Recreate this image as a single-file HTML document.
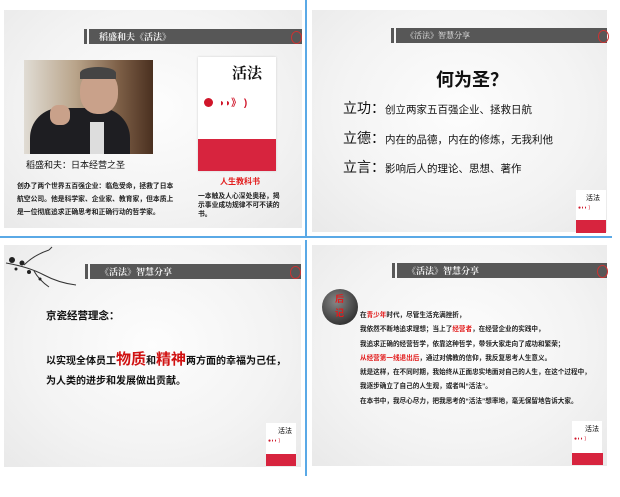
<!DOCTYPE html><html><head><meta charset="utf-8"><style>
body{margin:0;width:620px;height:497px;background:#fff;position:relative;overflow:hidden;font-family:"Liberation Sans","Noto Sans CJK SC",sans-serif}
.a{position:absolute}
.sl{position:absolute;background:radial-gradient(ellipse at 50% 45%,#fdfdfd 0%,#f3f3f3 60%,#e9e9e9 100%)}
.bar{position:absolute;height:15px;background:#575757;color:#eee;font-size:9px;line-height:15px;padding-left:10px;box-sizing:border-box;font-family:"Noto Serif CJK SC",serif;font-weight:bold}
.mk{position:absolute;width:3px;height:15px;background:#575757}
.seal{position:absolute;width:9px;height:11px;border:1px solid #c33;border-radius:50%}
.t{position:absolute;white-space:nowrap;color:#111}
.thumb{position:absolute;width:30px;height:43px;background:#fff}
.r{color:#e21b1b}
</style></head><body>
<div class="a" style="left:305px;top:0;width:2px;height:236px;background:#5aa9e6"></div>
<div class="a" style="left:0;top:236px;width:612px;height:2px;background:#5aa9e6"></div>
<div class="a" style="left:305px;top:240px;width:2px;height:236px;background:#5aa9e6"></div>

<!-- slide 1 -->
<div class="sl" style="left:4px;top:10px;width:298px;height:218px"></div>
<div class="mk" style="left:84px;top:29px"></div>
<div class="bar" style="left:89px;top:29px;width:213px">稻盛和夫《活法》</div>
<div class="seal" style="left:291px;top:31px"></div>
<div class="a" style="left:24px;top:60px;width:129px;height:94px;background:linear-gradient(90deg,#e0dcd4 0%,#b9a48a 40%,#7a5c44 75%,#4a3020 100%)"></div>
<div class="a" style="left:30px;top:108px;width:100px;height:46px;background:#1e1e22;border-radius:30px 30px 0 0"></div>
<div class="a" style="left:80px;top:70px;width:38px;height:44px;background:#c9a18a;border-radius:45%"></div>
<div class="a" style="left:80px;top:67px;width:36px;height:12px;background:#444;border-radius:50% 50% 0 0"></div>
<div class="a" style="left:90px;top:122px;width:14px;height:32px;background:#ddd"></div>
<div class="a" style="left:50px;top:105px;width:20px;height:20px;background:#c9a18a;border-radius:40%"></div>
<div class="t" style="left:26px;top:158px;font-size:9px">稻盛和夫：日本经营之圣</div>
<div class="a" style="left:17px;top:180px;width:160px;font-size:6.8px;font-weight:bold;line-height:13px;color:#222">创办了两个世界五百强企业：临危受命，拯救了日本航空公司。他是科学家、企业家、教育家，但本质上是一位彻底追求正确思考和正确行动的哲学家。</div>
<div class="a" style="left:198px;top:57px;width:78px;height:114px;background:#fff;box-shadow:0 0 2px #ccc"></div>
<div class="t" style="left:232px;top:62px;font-size:15px;font-family:'Noto Serif CJK SC',serif;font-weight:bold">活法</div>
<div class="a" style="left:204px;top:98px;width:9px;height:9px;border-radius:50%;background:#d0162a"></div>
<div class="t" style="left:219px;top:94px;font-size:10px;color:#d0162a;font-weight:bold">◗◗》 )</div>
<div class="a" style="left:198px;top:139px;width:78px;height:32px;background:#d7243e"></div>
<div class="t" style="left:220px;top:176px;font-size:8px;color:#e21b1b;font-weight:bold">人生教科书</div>
<div class="a" style="left:198px;top:192px;width:82px;font-size:6.8px;font-weight:bold;line-height:9px;color:#222">一本触及人心深处奥秘，揭示事业成功规律不可不读的书。</div>

<!-- slide 2 -->
<div class="sl" style="left:312px;top:10px;width:295px;height:222px"></div>
<div class="mk" style="left:391px;top:28px"></div>
<div class="bar" style="left:396px;top:28px;width:211px;font-size:8px;font-weight:normal">《活法》智慧分享</div>
<div class="seal" style="left:598px;top:30px"></div>
<div class="t" style="left:436px;top:66px;font-size:18px;font-weight:bold">何为圣？</div>
<div class="t" style="left:343px;top:98px;font-size:10.5px"><span style="font-size:14px">立功：</span>创立两家五百强企业、拯救日航</div>
<div class="t" style="left:343px;top:128px;font-size:10.5px"><span style="font-size:14px">立德：</span>内在的品德，内在的修炼，无我利他</div>
<div class="t" style="left:343px;top:157px;font-size:10.5px"><span style="font-size:14px">立言：</span>影响后人的理论、思想、著作</div>
<div class="thumb" style="left:576px;top:190px"><div class="a" style="left:10px;top:3px;font-size:7px">活法</div><div class="a" style="left:2px;top:15px;font-size:5px;color:#d0162a">●◗◗ )</div><div class="a" style="left:0;top:30px;width:30px;height:13px;background:#d7243e"></div></div>

<!-- slide 3 -->
<div class="sl" style="left:4px;top:245px;width:297px;height:222px"></div>
<svg class="a" style="left:4px;top:245px" width="75" height="45"><g stroke="#333" fill="none" stroke-width="1"><path d="M2 18 Q25 22 40 30 Q55 38 72 40"/><path d="M20 20 Q30 10 45 5"/><path d="M30 26 Q35 35 45 42"/><path d="M45 5 L48 2"/></g><g fill="#222"><circle cx="8" cy="15" r="3"/><circle cx="18" cy="18" r="2.5"/><circle cx="25" cy="27" r="2"/><circle cx="12" cy="24" r="1.5"/><circle cx="36" cy="34" r="1.5"/></g></svg>
<div class="mk" style="left:85px;top:264px"></div>
<div class="bar" style="left:90px;top:264px;width:211px">《活法》智慧分享</div>
<div class="seal" style="left:290px;top:266px"></div>
<div class="t" style="left:46px;top:308px;font-size:10.5px;font-weight:bold">京瓷经营理念：</div>
<div class="t" style="left:46px;top:348px;font-size:10px;font-weight:bold">以实现全体员工<span class="r" style="font-size:15px;color:#d01010">物质</span>和<span class="r" style="font-size:15px;color:#d01010">精神</span>两方面的幸福为己任，</div>
<div class="t" style="left:46px;top:372px;font-size:10px;font-weight:bold">为人类的进步和发展做出贡献。</div>
<div class="thumb" style="left:266px;top:423px"><div class="a" style="left:12px;top:3px;font-size:7px">活法</div><div class="a" style="left:2px;top:15px;font-size:5px;color:#d0162a">●◗◗ )</div><div class="a" style="left:0;top:31px;width:30px;height:12px;background:#d7243e"></div></div>

<!-- slide 4 -->
<div class="sl" style="left:312px;top:245px;width:295px;height:221px"></div>
<div class="mk" style="left:392px;top:263px"></div>
<div class="bar" style="left:397px;top:263px;width:210px">《活法》智慧分享</div>
<div class="seal" style="left:597px;top:265px"></div>
<div class="a" style="left:322px;top:289px;width:36px;height:36px;border-radius:50%;background:radial-gradient(circle at 40% 35%,#888,#333 75%)"></div>
<div class="t" style="left:335px;top:292px;font-size:9px;color:#e21b1b;font-weight:bold;line-height:14px;white-space:normal;width:10px">后<br>记</div>
<div class="a" style="left:360px;top:309px;font-size:6.6px;font-weight:bold;line-height:14.3px;color:#222;white-space:nowrap">在<span class="r">青少年</span>时代，尽管生活充满挫折，<br>我依然不断地追求理想；当上了<span class="r">经营者</span>，在经营企业的实践中，<br>我追求正确的经营哲学，依靠这种哲学，带领大家走向了成功和繁荣；<br><span class="r">从经营第一线退出后</span>，通过对佛教的信仰，我反复思考人生意义。<br>就是这样，在不同时期，我始终从正面忠实地面对自己的人生，在这个过程中，<br>我逐步确立了自己的人生观，或者叫“活法”。<br>在本书中，我尽心尽力，把我思考的“活法”想率地，毫无保留地告诉大家。</div>
<div class="thumb" style="left:572px;top:421px"><div class="a" style="left:13px;top:3px;font-size:7px">活法</div><div class="a" style="left:2px;top:15px;font-size:5px;color:#d0162a">●◗◗ )</div><div class="a" style="left:0;top:32px;width:31px;height:12px;background:#d7243e"></div></div>
</body></html>
